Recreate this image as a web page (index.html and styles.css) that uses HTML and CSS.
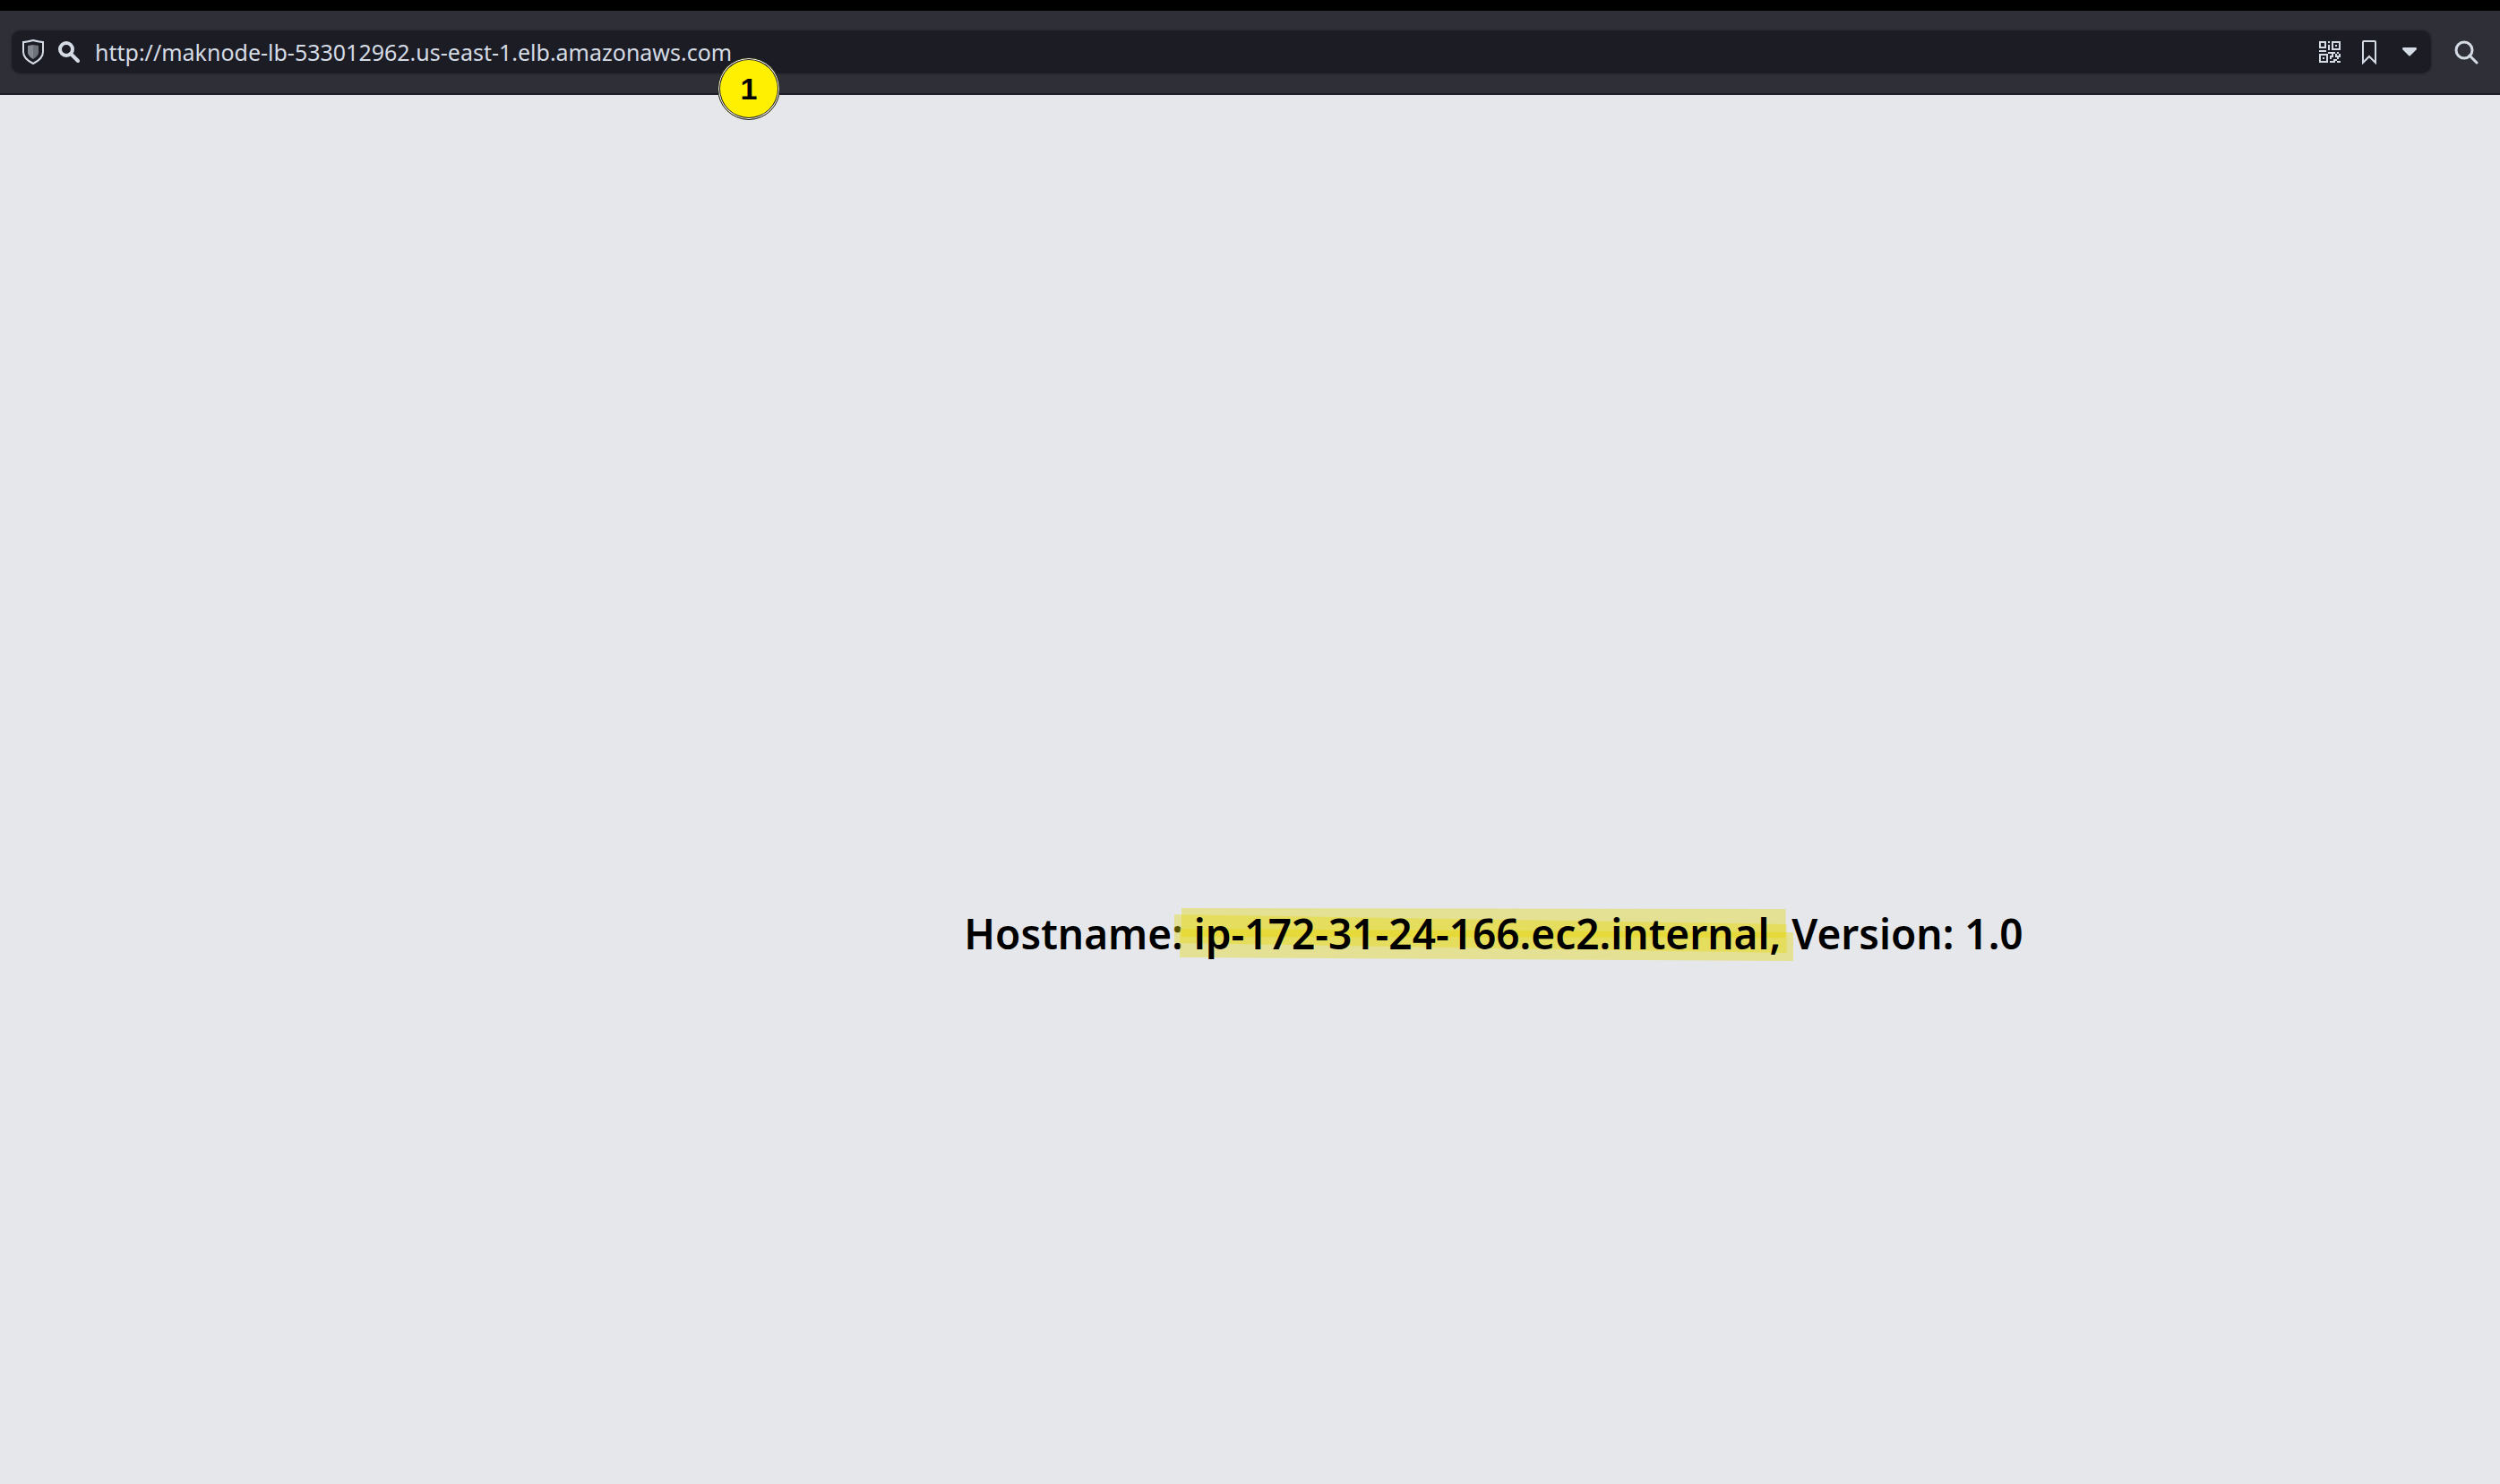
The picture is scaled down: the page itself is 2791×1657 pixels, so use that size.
FILE: index.html
```html
<!DOCTYPE html>
<html lang="en">
<head>
<meta charset="utf-8">
<title>Hostname</title>
<link rel="stylesheet" href="styles.css">
</head>
<body>
<header class="toolbar">
  <form class="address">
    <button class="icon-button" type="button" aria-label="Site protection">
      <svg width="24" height="28" viewBox="0 0 24 28"><path d="M12 1 C8 2 4 3 1 3 V14 C1 20 6 24 12 27 C18 24 23 20 23 14 V3 C20 3 16 2 12 1Z" fill="none" stroke="#d5dbe5" stroke-width="2"/><path d="M12 6 L6 7 V14 C6 18 9 20 12 22Z" fill="#83878f"/><path d="M12 6 L18 7 V14 C18 18 15 20 12 22Z" fill="#6d7179"/></svg>
    </button>
    <button class="icon-button" type="submit" aria-label="Search">
      <svg width="24" height="24" viewBox="0 0 24 24" fill="none" stroke="#d5dbe5"><circle cx="9" cy="9" r="7" stroke-width="4"/><path d="M14 14 L22 22" stroke-width="4" stroke-linecap="round"/></svg>
    </button>
    <input class="url" type="text" aria-label="Address" value="http://maknode-lb-533012962.us-east-1.elb.amazonaws.com">
    <div class="actions">
      <button class="icon-button" type="button" aria-label="QR code">
        <svg width="24" height="24" viewBox="0 0 24 24" fill="#d5dbe5" shape-rendering="crispEdges"><path fill-rule="evenodd" d="M0 0H8V8H0ZM2 2V6H6V2ZM14 0H24V10H14ZM16 2V8H22V2ZM18 4H20V6H18ZM0 14H10V24H0ZM2 16V22H8V16ZM4 18H6V20H4Z"/><path d="M10 0H12V2H10ZM10 4H12V10H10ZM0 10H8V12H0ZM10 12H18V14H16V16H14V14H10ZM20 12H22V14H20ZM18 14H20V16H22V14H24V18H22V20H20V18H18V16H16V18H14V20H12V16H18ZM16 20H20V22H24V24H20V22H18V24H12V22H16Z"/></svg>
      </button>
      <button class="icon-button" type="button" aria-label="Bookmark">
        <svg width="16" height="28" viewBox="0 0 16 28"><path d="M1 26 V3 Q1 2 2 2 H14 Q15 2 15 3 V26 L8 19Z" fill="none" stroke="#d5dbe5" stroke-width="2"/></svg>
      </button>
      <button class="icon-button" type="button" aria-label="Show history">
        <svg width="16" height="10" viewBox="0 0 16 10"><path d="M1 0H15Q16 0 16 2L9 9Q8 10 7 9L0 2Q0 0 1 0Z" fill="#d5dbe5"/></svg>
      </button>
    </div>
  </form>
  <button class="icon-button" type="button" aria-label="Find">
    <svg width="28" height="28" viewBox="0 0 28 28" fill="none" stroke="#d5dbe5"><circle cx="11" cy="12" r="9" stroke-width="3"/><path d="M17 18 L25 26" stroke-width="3" stroke-linecap="round"/></svg>
  </button>
  <span class="step">1</span>
</header>
<main class="page">
  <h1 class="message">Hostname: <span class="marked"><svg class="marker" viewBox="0 0 691 60" preserveAspectRatio="none" aria-hidden="true"><path d="M8 0 L682 1 V33 L8 32Z"/><path d="M0 7 L683 18 V50 L0 39Z"/><path d="M6 23 L691 27 V59 L6 55Z"/></svg>ip-172-31-24-166.ec2.internal,</span> Version: 1.0</h1>
</main>
</body>
</html>
```
FILE: styles.css
```css
* { box-sizing: border-box; }

body {
  margin: 0;
  min-height: 100vh;
  display: flex;
  flex-direction: column;
  background: #e5e7eb;
  font-family: "Noto Sans", sans-serif;
}

.toolbar {
  position: relative;
  display: flex;
  align-items: center;
  gap: 24px;
  padding: 20px 23px 20px 11px;
  border-top: 12px solid #000;
  border-bottom: 2px solid #1c1c24;
  background: #2f2f37;
}

.address {
  flex: 1;
  display: flex;
  align-items: center;
  gap: 16px;
  height: 52px;
  padding: 0 16px 0 12px;
  border: 2px solid #2b2b33;
  border-radius: 12px;
  background: #1c1c24;
}

.icon-button {
  display: flex;
  padding: 0;
  border: 0;
  background: none;
}

.url {
  flex: 1;
  min-width: 0;
  padding: 0;
  margin-left: 1px;
  border: 0;
  background: none;
  color: #d5dbe5;
  font: 400 25px/34px "Noto Sans", sans-serif;
}

.actions {
  display: flex;
  align-items: center;
  gap: 24px;
}

.actions .icon-button:last-child { margin-left: 5px; }

.step {
  position: absolute;
  left: 801px;
  top: 52px;
  width: 70px;
  height: 70px;
  border: 1px solid #222;
  border-radius: 50%;
  background: #ffef00;
  box-shadow: inset 0 0 0 1px #fff, inset 0 0 0 2px #222;
  color: #000;
  font: 700 34px/68px "Liberation Sans", sans-serif;
  text-align: center;
}

.page {
  flex: 1;
  display: flex;
  align-items: center;
  justify-content: center;
  padding: 320px 0 0 544px;
}

.message {
  margin: 0;
  color: #000;
  font-size: 46px;
  font-weight: 600;
  line-height: 66px;
  white-space: nowrap;
}

.marked {
  position: relative;
  z-index: 0;
}

.marker {
  position: absolute;
  left: -22px;
  top: 3px;
  z-index: -1;
  width: calc(100% + 36px);
  height: 60px;
  fill: rgb(230, 215, 0);
  fill-opacity: 0.37;
}
```
